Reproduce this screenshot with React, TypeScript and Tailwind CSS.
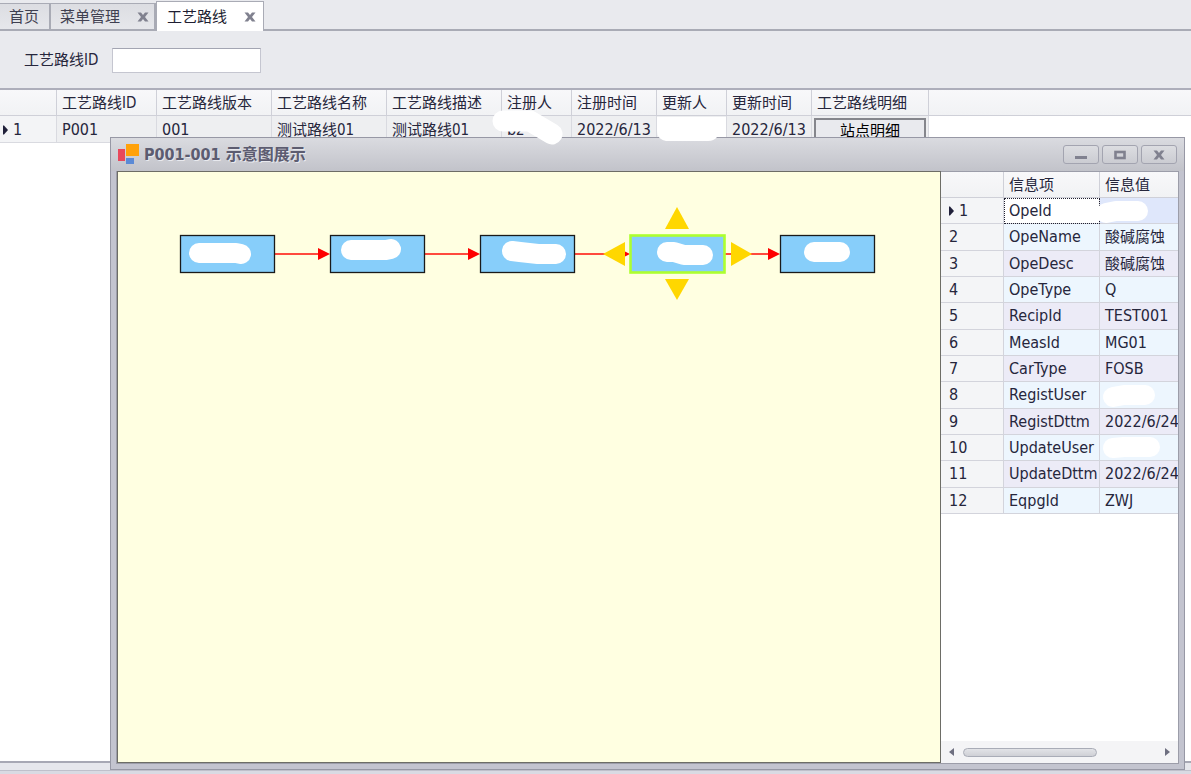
import React, { useState } from 'react';

type Tab = { id: string; title: string; closable: boolean };

const TABS: Tab[] = [
  { id: 'home', title: '首页', closable: false },
  { id: 'menu', title: '菜单管理', closable: true },
  { id: 'route', title: '工艺路线', closable: true },
];

const ROUTE_COLUMNS = [
  { title: '工艺路线ID', width: 'w-[100px]' },
  { title: '工艺路线版本', width: 'w-[115px]' },
  { title: '工艺路线名称', width: 'w-[115px]' },
  { title: '工艺路线描述', width: 'w-[115px]' },
  { title: '注册人', width: 'w-[70px]' },
  { title: '注册时间', width: 'w-[85px]' },
  { title: '更新人', width: 'w-[70px]' },
  { title: '更新时间', width: 'w-[85px]' },
  { title: '工艺路线明细', width: 'w-[117px]' },
];

const ROUTE_VALUES = ['P001', '001', '测试路线01', '测试路线01', 'bz', '2022/6/13', '', '2022/6/13'];

// mask: stroke used to cover a private value
const INFO_ROWS: { name: string; value: string; mask?: string }[] = [
  { name: 'OpeId', value: '', mask: 'M6 14 L16 12 H38' },
  { name: 'OpeName', value: '酸碱腐蚀' },
  { name: 'OpeDesc', value: '酸碱腐蚀' },
  { name: 'OpeType', value: 'Q' },
  { name: 'RecipId', value: 'TEST001' },
  { name: 'MeasId', value: 'MG01' },
  { name: 'CarType', value: 'FOSB' },
  { name: 'RegistUser', value: '', mask: 'M13 14 L24 12 H45' },
  { name: 'RegistDttm', value: '2022/6/24' },
  { name: 'UpdateUser', value: '', mask: 'M13 12 L24 11 H50' },
  { name: 'UpdateDttm', value: '2022/6/24' },
  { name: 'EqpgId', value: 'ZWJ' },
];

const NODES = [
  { x: 62, mask: 'M81 81 H118 L123 82' },
  { x: 212, mask: 'M233 78 H268 L273 77' },
  { x: 362, mask: 'M394 79 L402 80 L420 82 H438' },
  { x: 512, mask: 'M549 80 H556 L566 83 H585' },
  { x: 662, mask: 'M696 80 H722' },
];

// Chinese glyphs are set one size smaller than latin ones
const textSize = (value: string) => (/[\u4e00-\u9fff]/.test(value) ? 'text-[15px]' : 'text-[16px]');

const CloseGlyph = () => (
  <svg width="12" height="10" viewBox="0 0 12 10" aria-hidden="true">
    <path d="M0.5 0.5H4L6 3L8 0.5H11.5L8 5L11.5 9.5H8L6 7L4 9.5H0.5L4 5Z" fill="#80818f" />
  </svg>
);

const RowMarker = () => (
  <svg width="5" height="10" viewBox="0 0 5 10" aria-hidden="true">
    <path d="M0 0.5H1L5 5L1 9.5H0Z" fill="#20203a" />
  </svg>
);

const TabStrip: React.FC<{ active: string; onSelect: (id: string) => void }> = ({ active, onSelect }) => (
  <nav className="flex h-[31px] shrink-0 items-end border-b-2 border-[#a9abb5] bg-[#e9eaee]">
    {TABS.map((tab) => {
      const selected = tab.id === active;
      return (
        <div
          key={tab.id}
          className={
            selected
              ? '-mb-[2px] flex h-[30px] items-center border border-b-0 border-[#a9abb5] bg-white pr-[7px] pl-[10px]'
              : 'flex h-[26px] items-center border-t border-r-2 border-[#a9abb5] bg-linear-to-b from-[#dcdde2] to-[#e6e7eb] pr-[5px] pl-[9px]'
          }
        >
          <button
            type="button"
            className={selected ? 'text-[15px] text-[#1e1e32]' : 'pt-px text-[15px] text-[#3f3f50]'}
            onClick={() => onSelect(tab.id)}
          >
            {tab.title}
          </button>
          {tab.closable && (
            <button type="button" aria-label="关闭" className="ml-[17px]">
              <CloseGlyph />
            </button>
          )}
          {!tab.closable && <span className="w-[5px]" />}
        </div>
      );
    })}
  </nav>
);

const RouteTable = () => (
  <table className="w-full table-fixed border-separate border-spacing-0 text-left text-[15px]">
    <thead>
      <tr className="h-[26px] bg-linear-to-b from-[#f8f8fa] to-[#f1f2f4]">
        <th className="w-[57px] border-r border-b border-[#cfd0d8]" />
        {ROUTE_COLUMNS.map((col) => (
          <th
            key={col.title}
            className={`${col.width} overflow-hidden border-r border-b border-[#cfd0d8] pl-[5px] font-normal whitespace-nowrap`}
          >
            {col.title}
          </th>
        ))}
        <th className="border-b border-[#cfd0d8]" />
      </tr>
    </thead>
    <tbody>
      <tr className="h-[27px]">
        <td className="border-r border-b border-[#d9dae0] bg-[#f3f4f6] pt-px pl-[3px]">
          <div className="flex items-center gap-[5px] text-[16px]">
            <RowMarker />
            <span>1</span>
          </div>
        </td>
        {ROUTE_VALUES.map((value, i) => (
          <td
            key={i}
            className={`border-r border-b border-[#d9dae0] bg-[#eeeff1] pt-[2px] pl-[5px] whitespace-nowrap ${textSize(value)}`}
          >
            {value}
          </td>
        ))}
        <td className="border-r border-b border-[#d9dae0] bg-[#eeeff1] px-[2px] pt-[2px]">
          <button
            type="button"
            className="block h-6 w-full border-2 border-[#85868c] bg-[#e9eaee] text-center leading-[22px] text-black"
          >
            站点明细
          </button>
        </td>
        <td />
      </tr>
    </tbody>
  </table>
);

const RouteDiagram = () => (
  <svg width="822" height="300" viewBox="0 0 822 300" role="img" aria-label="示意图" className="max-w-none">
    {NODES.slice(1).map((node) => (
      <g key={node.x}>
        <path d={`M${node.x - 55} 82H${node.x - 10}`} stroke="#ff4a3d" strokeWidth="1.8" />
        <path d={`M${node.x - 12} 76L${node.x} 82L${node.x - 12} 88Z`} fill="#ff0000" />
      </g>
    ))}
    {NODES.map((node, i) => (
      <g key={node.x}>
        <rect
          x={node.x + 0.5}
          y="63.5"
          width="94"
          height="37"
          fill="#87cefa"
          stroke={i === 3 ? '#adff2f' : '#1a1a1a'}
          strokeWidth={i === 3 ? 2.6 : 1.3}
        />
        <path d={node.mask} fill="none" stroke="#fff" strokeWidth="20" strokeLinecap="round" strokeLinejoin="round" />
      </g>
    ))}
    {/* selection handles */}
    <g fill="#ffd700">
      <path d="M559 35L571 57H547Z" />
      <path d="M559 128L571 107H547Z" />
      <path d="M485 82L507 70V94Z" />
      <path d="M634 82L613 70V94Z" />
    </g>
  </svg>
);

const InfoPanel = () => (
  <aside className="flex w-[237px] shrink-0 flex-col overflow-hidden border-t border-[#9c9da9] bg-white">
    <div className="flex-1 overflow-hidden">
      <table className="h-[342px] w-full table-fixed border-separate border-spacing-0 text-left text-[15px]">
        <thead>
          <tr className="h-[26px] bg-linear-to-b from-[#f8f8fa] to-[#f1f2f4]">
            <th className="w-[63px] border-r border-b border-[#cfd0d8]" />
            <th className="w-[96px] border-r border-b border-[#cfd0d8] pl-[5px] font-normal">信息项</th>
            <th className="border-b border-[#cfd0d8] pl-[5px] font-normal">信息值</th>
          </tr>
        </thead>
        <tbody>
          {INFO_ROWS.map((row, i) => {
            const tone = i === 0 ? 'bg-[#dfe7fb]' : i % 2 ? 'bg-[#edf6fe]' : 'bg-[#ecebf7]';
            return (
              <tr key={row.name}>
                <td className="border-r border-b border-[#d3d4dc] bg-[#f4f5f7] pt-px pl-2">
                  <div className="flex items-center gap-[5px] text-[16px]">
                    {i === 0 && <RowMarker />}
                    <span>{i + 1}</span>
                  </div>
                </td>
                <td
                  className={`border-r border-b border-[#d3d4dc] pt-px pl-[5px] text-[16px] ${
                    i === 0 ? 'bg-white outline-1 -outline-offset-1 outline-[#202030] outline-dotted' : tone
                  }`}
                >
                  {row.name}
                </td>
                <td
                  className={`border-b border-[#d3d4dc] pt-px whitespace-nowrap ${tone} ${textSize(row.value)} ${row.mask ? '' : 'pl-[5px]'}`}
                >
                  {row.mask ? (
                    <svg width="78" height="24" viewBox="0 0 78 24" className="relative -my-1 block overflow-visible" aria-hidden="true">
                      <path d={row.mask} fill="none" stroke="#fff" strokeWidth="20" strokeLinecap="round" strokeLinejoin="round" />
                    </svg>
                  ) : (
                    row.value
                  )}
                </td>
              </tr>
            );
          })}
        </tbody>
      </table>
    </div>
    <div className="flex h-[22px] shrink-0 items-center bg-[#f4f4f6] px-2">
      <button type="button" aria-label="向左滚动" className="mr-[9px]">
        <svg width="5" height="8" viewBox="0 0 5 8"><path d="M5 0V8L0 4Z" fill="#6e6f80" /></svg>
      </button>
      <div className="flex-1">
        <div className="h-[9px] w-[134px] rounded-full border border-[#a9acb7] bg-linear-to-b from-[#e2e3e7] to-[#cfd0d6]" />
      </div>
      <button type="button" aria-label="向右滚动">
        <svg width="5" height="8" viewBox="0 0 5 8"><path d="M0 0V8L5 4Z" fill="#6e6f80" /></svg>
      </button>
    </div>
  </aside>
);

const WindowButton: React.FC<{ label: string; onClick?: () => void; children: React.ReactNode }> = ({ label, onClick, children }) => (
  <button
    type="button"
    aria-label={label}
    onClick={onClick}
    className="flex h-[19px] w-9 items-center justify-center rounded-[3px] border border-[#a3a4b0] bg-linear-to-b from-[#dcdde1] to-[#cbccd2]"
  >
    {children}
  </button>
);

const RouteWindow: React.FC<{ onClose: () => void }> = ({ onClose }) => (
  <section className="absolute top-[137px] right-[6px] bottom-1 left-[110px] flex flex-col border border-[#9798a5] bg-[#c3c4cf] px-[5px] pb-[5px]">
    <header className="-mx-[5px] flex h-[33px] shrink-0 items-center bg-linear-to-b from-[#dadbe0] to-[#c2c3ca] pr-[7px] pl-[7px]">
      <svg width="21" height="21" viewBox="0 0 21 21" aria-hidden="true">
        <rect x="0" y="5" width="7" height="12" fill="#e8485c" />
        <rect x="8" y="0" width="13" height="12" fill="#ffa10a" />
        <rect x="8" y="14" width="8" height="6" fill="#5b8ad6" />
      </svg>
      <h1 className="ml-[5px] text-[16px] font-bold text-[#5c5c70] [text-shadow:1px_1px_0_#e8e9ee]">P001-001 示意图展示</h1>
      <div className="ml-auto flex gap-[3px]">
        <WindowButton label="最小化">
          <svg width="12" height="10" viewBox="0 0 12 10"><rect x="0" y="6" width="12" height="3" fill="#80818f" /></svg>
        </WindowButton>
        <WindowButton label="最大化">
          <svg width="12" height="10" viewBox="0 0 12 10">
            <rect x="1.5" y="2" width="9" height="6" fill="none" stroke="#80818f" strokeWidth="2.6" />
          </svg>
        </WindowButton>
        <WindowButton label="关闭" onClick={onClose}>
          <CloseGlyph />
        </WindowButton>
      </div>
    </header>
    <div className="flex min-h-0 flex-1 border-x border-b border-[#9c9da9]">
      <div className="min-w-0 flex-1 overflow-hidden border border-[#6d6d66] bg-[#ffffe1]">
        <RouteDiagram />
      </div>
      <InfoPanel />
    </div>
  </section>
);

const App: React.FC = () => {
  const [active, setActive] = useState('route');
  const [routeId, setRouteId] = useState('');
  const [showWindow, setShowWindow] = useState(true);

  return (
    <div className="relative flex min-h-screen flex-col bg-white font-['DejaVu_Sans_Condensed','Noto_Sans_CJK_SC',sans-serif] leading-5 text-[#26263c]">
      <TabStrip active={active} onSelect={setActive} />
      <form className="flex h-[59px] shrink-0 items-center gap-[14px] border-b-2 border-[#adaeba] bg-[#e9eaee] pt-px pl-6 text-[15px]">
        <label htmlFor="routeId">工艺路线ID</label>
        <input
          id="routeId"
          type="text"
          value={routeId}
          onChange={(e) => setRouteId(e.target.value)}
          className="h-[25px] w-[149px] border border-[#c5c6d0] border-t-[#a3a5b2] bg-white px-1 outline-none"
        />
      </form>
      <main className="relative flex-1">
        <RouteTable />
      </main>
      <footer className="h-[13px] shrink-0 border-t-2 border-[#a7a8b4] bg-[#e6e7ec]">
        <div className="mt-[7px] h-1 border-t border-[#bfc0cb] bg-[#d9dae3]" />
      </footer>
      {showWindow && <RouteWindow onClose={() => setShowWindow(false)} />}
      {/* masked user names */}
      <svg width="240" height="40" viewBox="0 0 240 40" className="pointer-events-none absolute top-[108px] left-[488px]" aria-hidden="true">
        <path d="M15 13H42L64 26" fill="none" stroke="#fff" strokeWidth="21" strokeLinecap="round" strokeLinejoin="round" />
        <path d="M169 9H238V29H229Q226 33 220 33H178Q169 31 169 23Z" fill="#fff" />
      </svg>
    </div>
  );
};

export default App;
